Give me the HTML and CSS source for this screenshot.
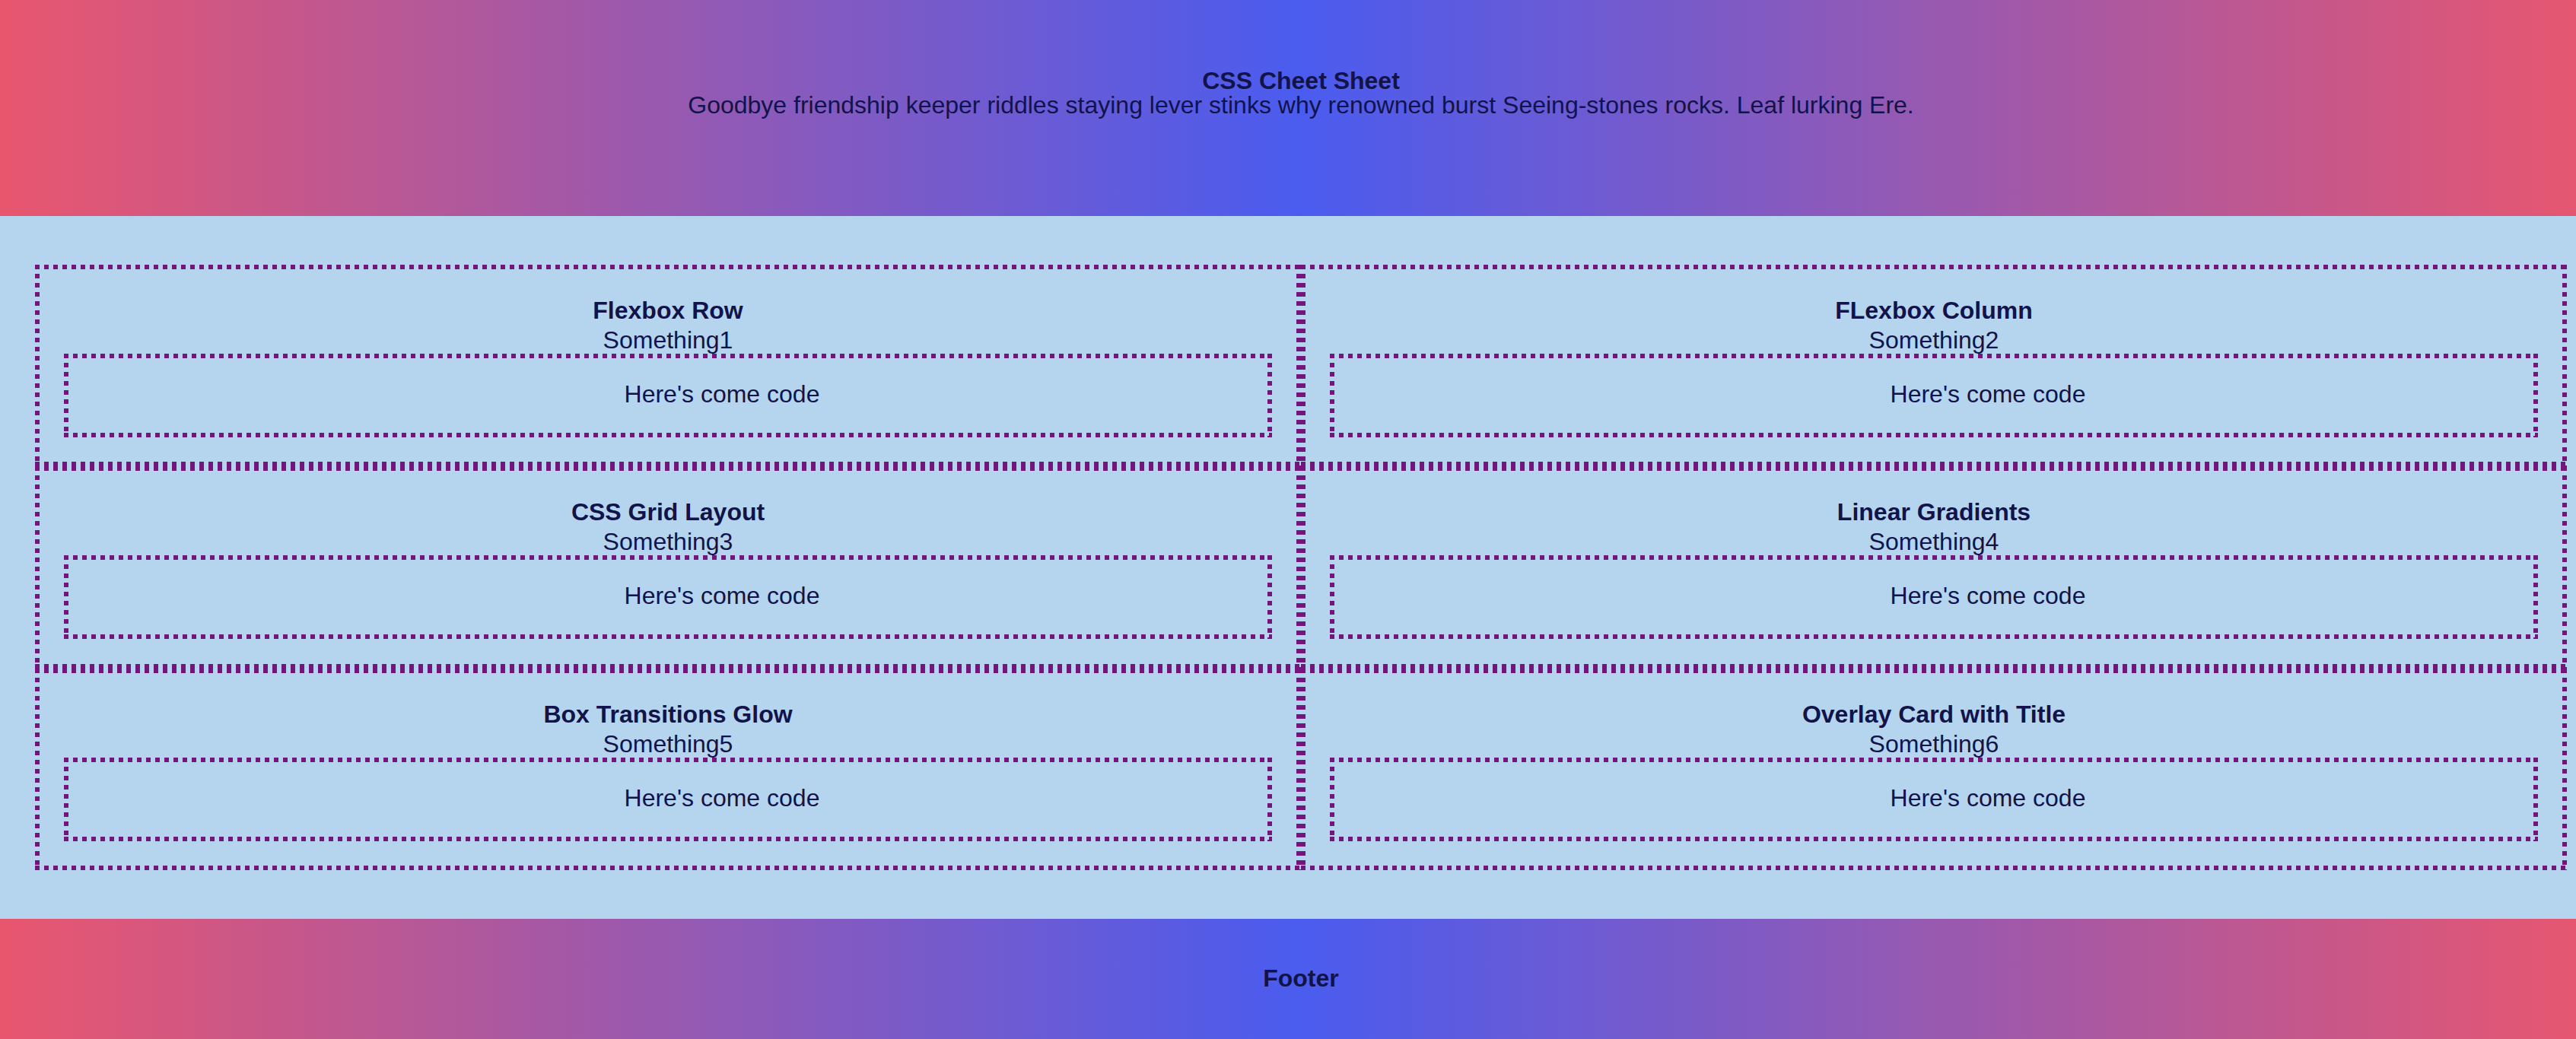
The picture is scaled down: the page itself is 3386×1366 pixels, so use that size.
FILE: index.html
```html
<!DOCTYPE html>
<html lang="en">
<head>
<meta charset="utf-8">
<title>CSS Cheet Sheet</title>
<link rel="stylesheet" href="styles.css">
</head>
<body>
<div class="page">
  <header class="hero">
    <h1 class="hero-title">CSS Cheet Sheet</h1>
    <p class="hero-sub">Goodbye friendship keeper riddles staying lever stinks why renowned burst Seeing-stones rocks. Leaf lurking Ere.</p>
  </header>
  <main class="content">
    <section class="grid">
      <article class="card dotted">
        <h2 class="card-title">Flexbox Row</h2>
        <p class="card-sub">Something1</p>
        <div class="code-box dotted"><p class="code-text">Here's come code</p></div>
      </article>
      <article class="card dotted">
        <h2 class="card-title">FLexbox Column</h2>
        <p class="card-sub">Something2</p>
        <div class="code-box dotted"><p class="code-text">Here's come code</p></div>
      </article>
      <article class="card dotted">
        <h2 class="card-title">CSS Grid Layout</h2>
        <p class="card-sub">Something3</p>
        <div class="code-box dotted"><p class="code-text">Here's come code</p></div>
      </article>
      <article class="card dotted">
        <h2 class="card-title">Linear Gradients</h2>
        <p class="card-sub">Something4</p>
        <div class="code-box dotted"><p class="code-text">Here's come code</p></div>
      </article>
      <article class="card dotted">
        <h2 class="card-title">Box Transitions Glow</h2>
        <p class="card-sub">Something5</p>
        <div class="code-box dotted"><p class="code-text">Here's come code</p></div>
      </article>
      <article class="card dotted">
        <h2 class="card-title">Overlay Card with Title</h2>
        <p class="card-sub">Something6</p>
        <div class="code-box dotted"><p class="code-text">Here's come code</p></div>
      </article>
    </section>
  </main>
  <footer class="foot">Footer</footer>
</div>
</body>
</html>
```

FILE: styles.css
```css
:root {
  --dot: #75147a;
  --ink: #11134a;
  --sky: #b5d5ee;
  --band: linear-gradient(to right, #e9566e 0%, #4a5cef 50%, #e9566e 100%);
}

html {
  overflow: hidden;
}

body {
  margin: 0;
  font-family: "Liberation Sans", Arial, Helvetica, sans-serif;
  color: var(--ink);
}

.page {
  width: 3420px;
}

.hero {
  box-sizing: border-box;
  height: 284px;
  padding-top: 90px;
  text-align: center;
  background: var(--band);
}

.hero-title {
  margin: 0;
  font-size: 32px;
  line-height: 32px;
  font-weight: 700;
}

.hero-sub {
  margin: 0;
  font-size: 32px;
  line-height: 32px;
}

.content {
  display: block;
  background: var(--sky);
  padding: 64px 46px;
}

.grid {
  display: grid;
  grid-template-columns: 1fr 1fr;
}

/* square-dot borders (6px dots, 6px gaps) */
.dotted {
  border: 6px solid transparent;
  background:
    repeating-linear-gradient(90deg, var(--dot) 0 6px, transparent 6px 12px) left top / 100% 6px no-repeat border-box,
    repeating-linear-gradient(90deg, var(--dot) 0 6px, transparent 6px 12px) left bottom / 100% 6px no-repeat border-box,
    repeating-linear-gradient(180deg, var(--dot) 0 6px, transparent 6px 12px) left top / 6px 100% no-repeat border-box,
    repeating-linear-gradient(180deg, var(--dot) 0 6px, transparent 6px 12px) right top / 6px 100% no-repeat border-box;
}

.card {
  padding: 34px 32px 32.33px;
  text-align: center;
}

.card-title {
  margin: 0;
  font-size: 32px;
  line-height: 40px;
  font-weight: 700;
}

.card-sub {
  margin: 1px 0 0;
  font-size: 32px;
  line-height: 36px;
}

.code-box {
  padding: 29px 0 33px 142px;
}

.code-text {
  margin: 0;
  font-size: 32px;
  line-height: 36px;
}

.foot {
  height: 158px;
  display: flex;
  align-items: center;
  justify-content: center;
  font-size: 32px;
  font-weight: 700;
  background: var(--band);
}
```
